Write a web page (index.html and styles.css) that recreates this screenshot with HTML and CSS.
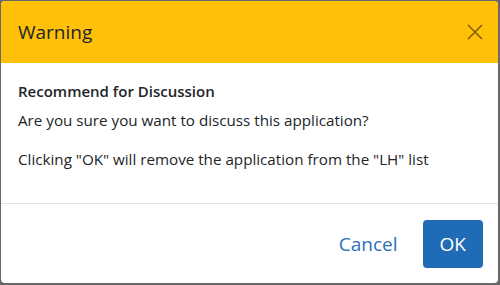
FILE: index.html
```html
<!DOCTYPE html>
<html>
<head>
    <title>Warning</title>
    <meta name="viewport" content="width=device-width, initial-scale=1.0">
    <link rel="stylesheet" href="styles.css">
</head>
<body>
    <div class="modal">
        <div class="modal-header">
            <h5 class="modal-title">Warning</h5>
            <button class="close" aria-label="Close">
                <svg width="16" height="16" viewBox="0 0 16 16">
                    <path d="M1 1 L15 15 M15 1 L1 15" stroke="currentColor" stroke-width="1.6" fill="none"/>
                </svg>
            </button>
        </div>
        <div class="modal-body">
            <div class="label">Recommend for Discussion</div>
            <p>Are you sure you want to discuss this application?</p>
            <p>Clicking "OK" will remove the application from the "LH" list</p>
        </div>
        <div class="modal-footer">
            <button class="btn btn-link">Cancel</button>
            <button class="btn btn-primary">OK</button>
        </div>
    </div>
</body>
</html>
```

FILE: styles.css
```css
html, body { margin: 0; height: 100%; }
body { background: #686868; padding: 1px; box-sizing: border-box; font-family: "Open Sans", "Noto Sans", sans-serif; color: #212529; }
.modal { background: #fff; border-radius: 4px; height: 282px; width: 497px; display: flex; flex-direction: column; overflow: hidden; }
.modal-header { background: #ffc107; height: 62px; box-sizing: border-box; padding: 0 15px 0 17px; display: flex; align-items: center; justify-content: space-between; }
.modal-title { margin: 0; font-size: 19px; font-weight: 400; line-height: 30px; }
.close { background: none; border: none; padding: 0; color: #806000; display: flex; cursor: pointer; }
.modal-body { padding: 16px 17px; border-bottom: 1px solid #dee2e6; flex: none; height: 141px; box-sizing: border-box; font-size: 15.2px; line-height: 24px; }
.label { font-weight: 600; font-size: 15px; margin-bottom: 5px; }
.modal-body p { margin: 0 0 15px 0; }
.modal-footer { flex: 1; display: flex; justify-content: flex-end; align-items: center; gap: 8px; padding: 0 15px; }
.btn { font-family: inherit; font-size: 19px; line-height: 30px; padding: 8px 16px; border: 1px solid transparent; border-radius: 4px; cursor: pointer; }
.btn-link { background: none; color: #2a6fbb; }
.btn-primary { background: #1f6bb5; color: #fff; }
```
